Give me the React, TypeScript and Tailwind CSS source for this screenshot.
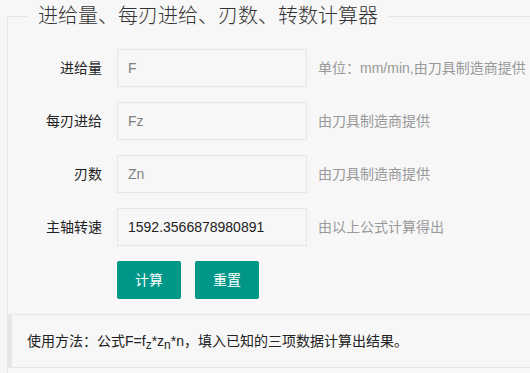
import React from "react";

const font = { fontFamily: '"Liberation Sans", "Noto Sans CJK SC", sans-serif' };

function Row({ label, placeholder, value, help }: { label: string; placeholder: string; value?: string; help: string }) {
  return (
    <div className="flex items-center h-[38px] mb-[15px]">
      <div className="w-[110px] pr-[15px] text-right text-[14px] text-[#222] shrink-0">{label}</div>
      <input
        readOnly
        defaultValue={value}
        placeholder={placeholder}
        className="w-[190px] h-[38px] shrink-0 border border-[#e6e6e6] bg-transparent pl-[10px] text-[14px] text-[#222] placeholder:text-[#808080] outline-none"
        style={font}
      />
      <div className="ml-[11px] text-[14px] text-[#999] whitespace-nowrap">{help}</div>
    </div>
  );
}

export default function App() {
  return (
    <div className="w-[530px] h-[373px] overflow-hidden bg-[#f7f7f7] relative" style={font}>
      <div className="pl-[7px] pt-[2px]">
        <fieldset className="w-[600px] border border-[#e6e6e6] pt-[19px] pb-[20px]">
          <legend className="ml-[20px] px-[10px] text-[20px] leading-[28px] font-light text-[#333]">
            进给量、每刃进给、刃数、转数计算器
          </legend>
          <div className="-ml-px">
            <Row label="进给量" placeholder="F" help="单位：mm/min,由刀具制造商提供" />
            <Row label="每刃进给" placeholder="Fz" help="由刀具制造商提供" />
            <Row label="刃数" placeholder="Zn" help="由刀具制造商提供" />
            <Row label="主轴转速" placeholder="n" value="1592.3566878980891" help="由以上公式计算得出" />
            <div className="flex pl-[110px] gap-[14px] mb-[15px]">
              <button className="w-[64px] h-[38px] rounded-[2px] bg-[#009688] text-white text-[14px]">计算</button>
              <button className="w-[64px] h-[38px] rounded-[2px] bg-[#009688] text-white text-[14px]">重置</button>
            </div>
            <div className="border border-[#e6e6e6] border-l-[5px] px-[15px] py-[15px] text-[14px] leading-[22px] text-[#222]">
              使用方法：公式F=f<sub className="text-[12px]">z</sub>*z<sub className="text-[12px]">n</sub>*n，填入已知的三项数据计算出结果。
            </div>
          </div>
        </fieldset>
      </div>
    </div>
  );
}
